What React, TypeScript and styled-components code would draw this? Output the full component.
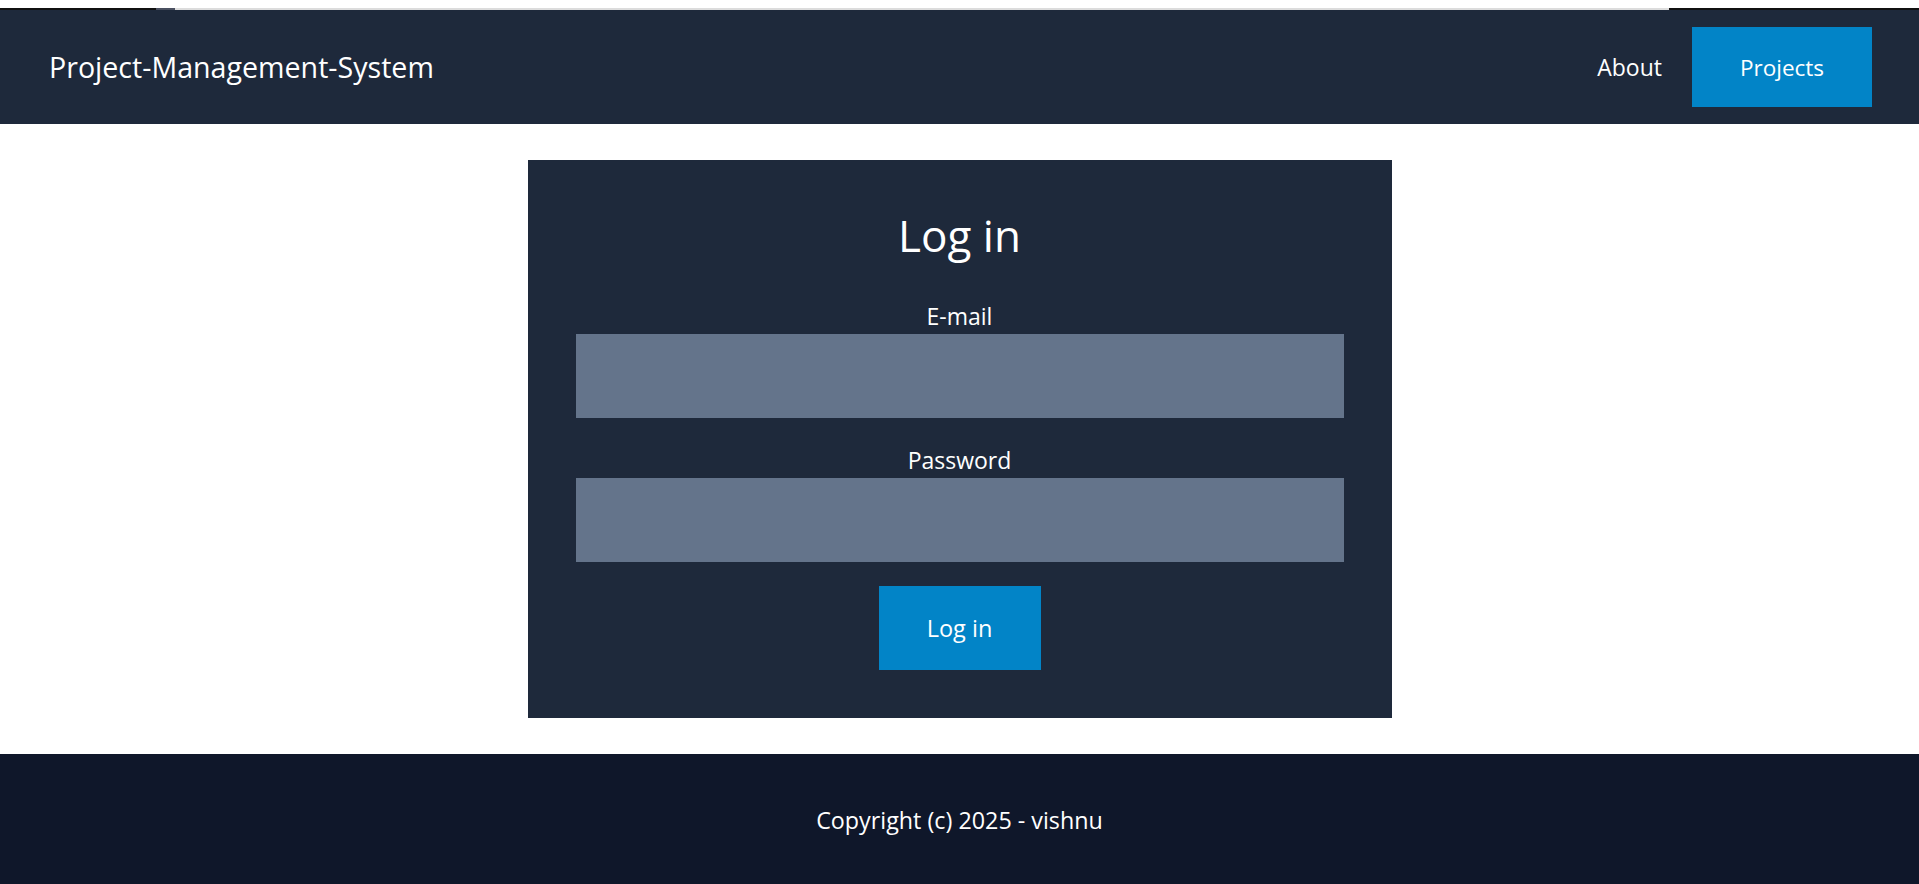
import React from 'react';
import styled, { createGlobalStyle } from 'styled-components';

const GlobalStyle = createGlobalStyle`
    * {
        box-sizing: border-box;
    }
    html,
    body {
        margin: 0;
        padding: 0;
        background: #ffffff;
        font-family: 'Open Sans', 'Noto Sans', sans-serif;
        color: #ffffff;
    }
`;

const App = () => {
    return (
        <Page>
            <GlobalStyle />
            <TopEdge />
            <Header>
                <Brand>Project-Management-System</Brand>
                <Nav>
                    <NavLink href="#">About</NavLink>
                    <NavButton href="#">Projects</NavButton>
                </Nav>
            </Header>
            <Main>
                <Card onSubmit={e => e.preventDefault()}>
                    <Heading>Log in</Heading>
                    <Field>
                        <Label htmlFor="email">E-mail</Label>
                        <Input id="email" type="email" />
                    </Field>
                    <Field>
                        <Label htmlFor="password">Password</Label>
                        <Input id="password" type="password" />
                    </Field>
                    <SubmitButton type="submit">Log in</SubmitButton>
                </Card>
            </Main>
            <Footer>Copyright (c) 2025 - vishnu</Footer>
        </Page>
    );
};

export default App;

const Page = styled.div`
    display: flex;
    flex-direction: column;
    min-height: 100vh;
`;

// thin strip left over from the browser chrome at the top of the shot
const TopEdge = styled.div`
    height: 10px;
    background: #ffffff;
    border-bottom: 2px solid transparent;
    border-image: linear-gradient(
            to right,
            #111 0,
            #111 157px,
            #4a5060 157px,
            #4a5060 176px,
            #dcdcdc 176px,
            #dcdcdc 1668px,
            #111 1668px
        )
        1;
`;

const Header = styled.header`
    display: flex;
    align-items: center;
    justify-content: space-between;
    height: 114px;
    padding: 0 47px 0 49px;
    background-color: #1e293b;
`;

const Brand = styled.div`
    font-size: 28.6px;
    line-height: 40px;
    color: #ffffff;
`;

const Nav = styled.nav`
    display: flex;
    align-items: center;
    gap: 30px;
`;

const NavLink = styled.a`
    font-size: 23px;
    line-height: 36px;
    color: #ffffff;
    text-decoration: none;
`;

const NavButton = styled.a`
    display: flex;
    align-items: center;
    justify-content: center;
    width: 180px;
    height: 80px;
    font-size: 22.5px;
    color: #ffffff;
    text-decoration: none;
    background-color: #0284c7;
`;

const Main = styled.main`
    display: flex;
    justify-content: center;
    padding: 36px 0;
    background: #ffffff;
`;

const Card = styled.form`
    display: flex;
    flex-direction: column;
    align-items: center;
    width: 864px;
    padding: 48px;
    background-color: #1e293b;
`;

const Heading = styled.h1`
    margin: 0 0 36px;
    font-size: 44px;
    line-height: 54px;
    font-weight: 400;
`;

const Field = styled.div`
    display: flex;
    flex-direction: column;
    align-items: center;
    width: 100%;
    margin-bottom: 24px;
`;

const Label = styled.label`
    font-size: 23px;
    line-height: 36px;
`;

const Input = styled.input`
    width: 100%;
    height: 84px;
    padding: 24px;
    border: none;
    outline: none;
    font-family: inherit;
    font-size: 23px;
    color: #ffffff;
    background-color: #64748b;
`;

const SubmitButton = styled.button`
    height: 84px;
    width: 162px;
    padding: 0;
    border: none;
    font-family: inherit;
    font-size: 23.5px;
    color: #ffffff;
    background-color: #0284c7;
    cursor: pointer;
`;

const Footer = styled.footer`
    padding: 48px 0;
    text-align: center;
    font-size: 23.3px;
    line-height: 36px;
    background-color: #0f172a;
`;
